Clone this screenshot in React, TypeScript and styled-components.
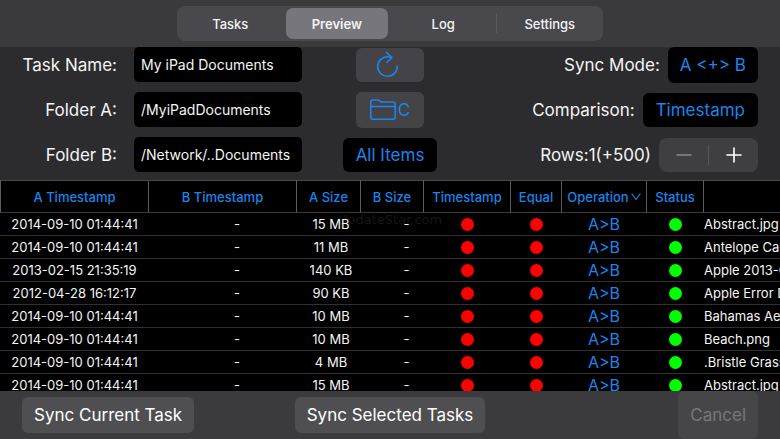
import React, { useState } from "react";
import styled, { createGlobalStyle, css } from "styled-components";

const blue = "#1c84ea";

const GlobalStyle = createGlobalStyle`
  *, *::before, *::after { box-sizing: border-box; }
  body { margin: 0; background: #000; }
  button, input { font: inherit; color: inherit; }
`;

const Page = styled.div`
  display: flex;
  flex-direction: column;
  height: 100vh;
  overflow: hidden;
  background: #2c2c2e;
  color: #f4f4f5;
  font-family: Inter, "Liberation Sans", sans-serif;
  font-size: 17px;
  line-height: 20px;
`;

const TopBar = styled.header`
  flex: none;
  display: flex;
  justify-content: center;
  padding: 6px 22px;
  background: #3a3a3c;
`;

const Segments = styled.nav`
  display: grid;
  grid-template-columns: repeat(4, 1fr);
  width: 100%;
  max-width: 426px;
  height: 35px;
  padding: 2px 0;
  border-radius: 8px;
  background: #49494d;
`;

const Segment = styled.button<{ $divided?: boolean }>`
  position: relative;
  margin: 0 2px;
  border: 0;
  padding: 0;
  border-radius: 7px;
  background: transparent;
  font-size: 13px;
  font-weight: 500;

  &[aria-pressed="true"] {
    background: #77767c;
    font-weight: 600;
  }

  ${(p) =>
    p.$divided &&
    css`
      &::after {
        content: "";
        position: absolute;
        right: -2px;
        top: 6px;
        bottom: 6px;
        width: 1px;
        background: #5a5a5e;
      }
    `}
`;

const Form = styled.section`
  flex: none;
  display: grid;
  grid-template-columns: 1fr auto 1fr;
  padding-bottom: 8px;
`;

const Fields = styled.div`
  display: grid;
  grid-template-columns: 117px 168px;
  grid-auto-rows: 35px;
  align-items: center;
  gap: 10px 17px;
`;

const FieldLabel = styled.label`
  text-align: right;
  white-space: nowrap;
`;

const TextField = styled.input`
  width: 100%;
  height: 35px;
  border: 0;
  border-radius: 5px;
  padding: 0 7px;
  background: #000;
  font-size: 14px;
`;

const Actions = styled.div`
  display: grid;
  grid-auto-rows: 35px;
  row-gap: 10px;
  place-items: center;
`;

const Options = styled.div`
  display: grid;
  grid-auto-rows: 35px;
  row-gap: 10px;
  padding: 0 22px;
`;

const Option = styled.div`
  display: flex;
  align-items: center;
  justify-content: flex-end;
  gap: 8px;
  white-space: nowrap;
`;

const IconButton = styled.button<{ $tall?: boolean }>`
  display: flex;
  align-items: center;
  justify-content: center;
  gap: 2px;
  width: 68px;
  height: ${(p) => (p.$tall ? 36 : 34)}px;
  border: 0;
  border-radius: 6px;
  padding: 0;
  background: #444448;
  color: ${blue};
`;

const MenuButton = styled.button<{ $tall?: boolean }>`
  height: ${(p) => (p.$tall ? 36 : 34)}px;
  border: 0;
  border-radius: 6px;
  padding: 0 ${(p) => (p.$tall ? 12 : 13)}px;
  background: #000;
  color: ${blue};
  white-space: nowrap;
`;

const Stepper = styled.div`
  display: grid;
  grid-template-columns: 1fr 1px 1fr;
  align-items: center;
  width: 99px;
  height: 34px;
  border-radius: 8px;
  background: #3f3f43;
`;

const StepButton = styled.button`
  display: grid;
  place-items: center;
  height: 34px;
  border: 0;
  padding: 0;
  background: transparent;
  color: #fff;

  &:disabled { color: #8b8b8f; }
`;

const StepDivider = styled.span`
  height: 20px;
  background: #55555a;
`;

const TableArea = styled.main`
  position: relative;
  flex: 1;
  min-height: 0;
  overflow: hidden;
  background: #000;
`;

const Table = styled.table`
  position: relative;
  width: 100%;
  table-layout: fixed;
  border-collapse: separate;
  border-spacing: 0;
  font-size: 13px;
  line-height: 16px;
`;

const Col = styled.col<{ $w?: number }>`
  width: ${(p) => (p.$w ? `${p.$w}px` : "auto")};
`;

const HeadCell = styled.th`
  height: 33px;
  padding: 0;
  border-top: 1px solid #48484a;
  border-left: 1px solid #5a5a5c;
  border-bottom: 1px solid #3a3a3c;
  color: ${blue};
  font-size: 13px;
  font-weight: 500;
  white-space: nowrap;
`;

const SortButton = styled.button`
  display: inline-flex;
  align-items: center;
  gap: 2px;
  border: 0;
  padding: 0;
  background: transparent;
`;

const Cell = styled.td<{ $shift?: number; $left?: boolean }>`
  height: 23px;
  padding: 0 0 0 ${(p) => p.$shift ?? 1}px;
  border-bottom: 1px solid #303032;
  text-align: ${(p) => (p.$left ? "left" : "center")};
  white-space: nowrap;
  overflow: hidden;
`;

const OperationCell = styled(Cell)`
  color: ${blue};
  font-size: 16px;
`;

const Dot = styled.span<{ $color: string }>`
  display: block;
  width: 13px;
  height: 13px;
  margin: 0 auto;
  border-radius: 50%;
  background: ${(p) => p.$color};
`;

const Watermark = styled.span`
  position: absolute;
  top: 32px;
  left: 50%;
  transform: translateX(-50%);
  color: #161616;
  font-family: "DejaVu Sans", sans-serif;
  font-size: 13px;
  line-height: 16px;
  pointer-events: none;
`;

const Footer = styled.footer`
  flex: none;
  display: grid;
  grid-template-columns: 1fr auto 1fr;
  align-items: center;
  height: 48px;
  padding: 0 22px;
  background: #3b3b3d;
`;

const FooterButton = styled.button<{ $end?: boolean }>`
  justify-self: ${(p) => (p.$end ? "end" : "start")};
  height: 36px;
  border: 0;
  border-radius: 6px;
  padding: 0 12px;
  background: #4f4f52;
  color: #fff;
  white-space: nowrap;

  &:disabled {
    height: 48px;
    background: #464649;
    color: #77777a;
  }
`;

const RefreshIcon = () => (
  <svg width="30" height="28" viewBox="0 0 30 28" fill="none" stroke="currentColor" strokeWidth="1.6" strokeLinecap="round" strokeLinejoin="round" aria-hidden="true">
    <path d="M22.300 15.300A9.800 9.800 0 1 1 12.500 5.700Q14.600 5.700 16.700 6.500M11.300 1.300L16.900 6.500L11.800 11.500" />
  </svg>
);

const FolderIcon = () => (
  <svg width="26" height="22" viewBox="0 0 26 22" fill="none" stroke="currentColor" strokeWidth="1.6" strokeLinejoin="round" aria-hidden="true">
    <path d="M.8 18V3.200Q.8 1 3 1H7.500Q8.500 1 9.300 1.700L10.300 2.500Q11 3 12 3H23Q25.200 3 25.200 5.200V18Q25.200 20.200 23 20.200H3Q.8 20.200.8 18ZM.8 7.500H25.200" />
  </svg>
);

const ChevronIcon = () => (
  <svg width="10" height="8" viewBox="0 0 10 8" fill="none" stroke="currentColor" strokeWidth="1.2" strokeLinecap="round" strokeLinejoin="round" aria-hidden="true">
    <path d="M1 1l4 5.500 4-5.500" />
  </svg>
);

const MinusIcon = () => (
  <svg width="16" height="16" viewBox="0 0 16 16" stroke="currentColor" strokeWidth="1.3" strokeLinecap="round" aria-hidden="true">
    <path d="M1 8h14" />
  </svg>
);

const PlusIcon = () => (
  <svg width="16" height="16" viewBox="0 0 16 16" stroke="currentColor" strokeWidth="1.6" strokeLinecap="round" aria-hidden="true">
    <path d="M1 8h14M8 1v14" />
  </svg>
);

const tabs = ["Tasks", "Preview", "Log", "Settings"];

const fields = [
  { id: "task-name", label: "Task Name:", value: "My iPad Documents" },
  { id: "folder-a", label: "Folder A:", value: "/MyiPadDocuments" },
  { id: "folder-b", label: "Folder B:", value: "/Network/..Documents" },
];

const columnWidths = [148, 148, 64, 63, 87, 51, 85, 57];

const rows = [
  { time: "2014-09-10 01:44:41", size: "15 MB", name: "Abstract.jpg" },
  { time: "2014-09-10 01:44:41", size: "11 MB", name: "Antelope Canyon.jpg" },
  { time: "2013-02-15 21:35:19", size: "140 KB", name: "Apple 2013-Q1.pdf" },
  { time: "2012-04-28 16:12:17", size: "90 KB", name: "Apple Error Dialog.png" },
  { time: "2014-09-10 01:44:41", size: "10 MB", name: "Bahamas Aerial.jpg" },
  { time: "2014-09-10 01:44:41", size: "10 MB", name: "Beach.png" },
  { time: "2014-09-10 01:44:41", size: "4 MB", name: ".Bristle Grass.jpg" },
  { time: "2014-09-10 01:44:41", size: "15 MB", name: "Abstract.jpg" },
];

export default function App() {
  const [tab, setTab] = useState("Preview");

  return (
    <>
      <GlobalStyle />
      <Page>
        <TopBar>
          <Segments aria-label="Views">
            {tabs.map((name) => (
              <Segment
                key={name}
                type="button"
                aria-pressed={tab === name}
                $divided={name === "Log"}
                onClick={() => setTab(name)}
              >
                {name}
              </Segment>
            ))}
          </Segments>
        </TopBar>

        <Form>
          <Fields>
            {fields.map((f) => (
              <React.Fragment key={f.id}>
                <FieldLabel htmlFor={f.id}>{f.label}</FieldLabel>
                <TextField id={f.id} type="text" defaultValue={f.value} />
              </React.Fragment>
            ))}
          </Fields>
          <Actions>
            <IconButton type="button" aria-label="Refresh"><RefreshIcon /></IconButton>
            <IconButton type="button" aria-label="Folder C" $tall><FolderIcon />C</IconButton>
            <MenuButton type="button">All Items</MenuButton>
          </Actions>
          <Options>
            <Option>
              <span id="mode-label">Sync Mode:</span>
              <MenuButton type="button" aria-haspopup="menu" aria-describedby="mode-label" $tall>{"A <+> B"}</MenuButton>
            </Option>
            <Option>
              <span id="comparison-label">Comparison:</span>
              <MenuButton type="button" aria-haspopup="menu" aria-describedby="comparison-label">Timestamp</MenuButton>
            </Option>
            <Option>
              <span id="rows-label">Rows:1(+500)</span>
              <Stepper role="group" aria-labelledby="rows-label">
                <StepButton type="button" aria-label="Fewer rows" disabled><MinusIcon /></StepButton>
                <StepDivider />
                <StepButton type="button" aria-label="More rows"><PlusIcon /></StepButton>
              </Stepper>
            </Option>
          </Options>
        </Form>

        <TableArea>
          <Watermark>UpdateStar.com</Watermark>
          <Table>
            <colgroup>
              {columnWidths.map((w, i) => <Col key={i} $w={w} />)}
              <Col />
            </colgroup>
            <thead>
              <tr>
                <HeadCell>A Timestamp</HeadCell>
                <HeadCell>B Timestamp</HeadCell>
                <HeadCell>A Size</HeadCell>
                <HeadCell>B Size</HeadCell>
                <HeadCell>Timestamp</HeadCell>
                <HeadCell>Equal</HeadCell>
                <HeadCell><SortButton type="button">Operation<ChevronIcon /></SortButton></HeadCell>
                <HeadCell>Status</HeadCell>
                <HeadCell aria-label="Name" />
              </tr>
            </thead>
            <tbody>
              {rows.map((row, i) => (
                <tr key={i}>
                  <Cell>{row.time}</Cell>
                  <Cell $shift={30}>-</Cell>
                  <Cell $shift={6}>{row.size}</Cell>
                  <Cell $shift={30}>-</Cell>
                  <Cell><Dot $color="#ff0000" role="img" aria-label="Different timestamp" /></Cell>
                  <Cell><Dot $color="#ff0000" role="img" aria-label="Not equal" /></Cell>
                  <OperationCell>{"A>B"}</OperationCell>
                  <Cell><Dot $color="#00ff00" role="img" aria-label="Ready" /></Cell>
                  <Cell $left>{row.name}</Cell>
                </tr>
              ))}
            </tbody>
          </Table>
        </TableArea>

        <Footer>
          <FooterButton type="button">Sync Current Task</FooterButton>
          <FooterButton type="button">Sync Selected Tasks</FooterButton>
          <FooterButton type="button" $end disabled>Cancel</FooterButton>
        </Footer>
      </Page>
    </>
  );
}
